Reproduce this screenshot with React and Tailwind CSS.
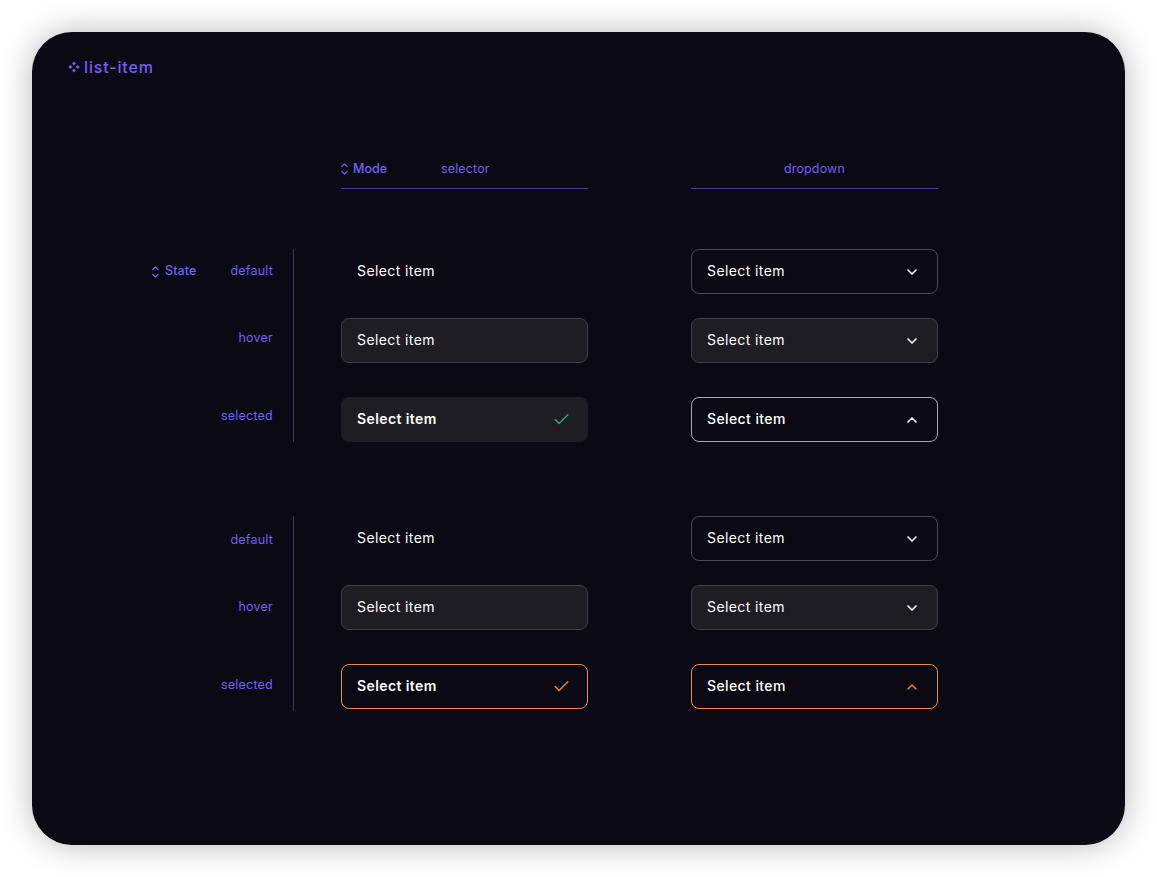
import { Check, ChevronDown, ChevronUp } from 'lucide-react'

function LogoMark() {
  return (
    <svg width="12" height="12" viewBox="0 0 12 12" fill="#7460f5" className="shrink-0">
      <path d="M6 0.4 7.9 2.5 6 4.5 4.1 2.5Z" />
      <path d="M2.4 4 4.4 6 2.4 8 0.4 6Z" />
      <path d="M9.6 4 11.6 6 9.6 8 7.6 6Z" />
      <path d="M6 7.5 7.9 9.5 6 11.6 4.1 9.5Z" />
    </svg>
  )
}

function UpDown() {
  return (
    <svg width="7" height="12" viewBox="0 0 7 12" fill="none" stroke="#7460f5" strokeWidth="1.3" strokeLinecap="round" strokeLinejoin="round" className="shrink-0">
      <path d="M0.8 3.6 3.5 1 6.2 3.6" />
      <path d="M0.8 8.4 3.5 11 6.2 8.4" />
    </svg>
  )
}

function Item({ bold, className = '', children }) {
  return (
    <div className={`flex h-[45px] w-[247px] items-center justify-between rounded-lg border px-[15px] text-[14px] text-white tracking-[0.4px] ${bold ? 'font-semibold' : ''} ${className}`}>
      <span className="pb-[2px]">Select item</span>
      {children}
    </div>
  )
}

function Row({ className = '', label, labelClass = '', extra, children }) {
  return (
    <div className={`flex ${className}`}>
      <div className="flex w-[143px] items-center justify-between pr-5 text-[12.5px] text-[#7460f5] tracking-[0.22px]">
        <span className="ml-[2px] flex items-center gap-[6px] font-medium tracking-[0.1px]">{extra}</span>
        <span className={labelClass}>{label}</span>
      </div>
      <div className="ml-[48px] flex gap-[103px]">{children}</div>
    </div>
  )
}

function Group({ className = '', selected, first }) {
  const arrow = <ChevronDown size={16} strokeWidth={2.5} className="mr-[2px] text-white" />
  return (
    <div className={`relative ${className}`}>
      <div className="absolute left-[143px] top-0 bottom-0 w-px bg-[#3a3463]" />
      <Row
        label="default"
        labelClass={first ? '' : 'mt-[3px]'}
        extra={first ? <><UpDown /> State</> : null}
      >
        <Item className="border-transparent" />
        <Item className="border-[#4a4a55]">{arrow}</Item>
      </Row>
      <Row className="mt-6" label="hover" labelClass={first ? 'mb-[5px]' : ''}>
        <Item className="bg-[#1d1d23] border-[#3f3f48]" />
        <Item className="bg-[#1d1d23] border-[#3f3f48]">{arrow}</Item>
      </Row>
      <Row className="mt-[34px]" label="selected" labelClass={first ? 'mb-[7px]' : 'mb-[3px]'}>
        {selected === 'fill' ? (
          <Item bold className="bg-[#1d1d23] border-transparent">
            <Check size={19} strokeWidth={1.7} className="mr-[1px] text-[#22b07d]" />
          </Item>
        ) : (
          <Item bold className="border-[#f08a4b]">
            <Check size={19} strokeWidth={1.7} className="mr-[1px] text-[#f08a4b]" />
          </Item>
        )}
        {selected === 'fill' ? (
          <Item className="border-[#a9a8b4] font-medium">
            <ChevronUp size={16} strokeWidth={2.5} className="mr-[2px] text-white" />
          </Item>
        ) : (
          <Item className="border-[#f08a4b] font-medium">
            <ChevronUp size={16} strokeWidth={2} className="mr-[2px] text-[#f08a4b]" />
          </Item>
        )}
      </Row>
    </div>
  )
}

export default function App() {
  return (
    <div className="min-h-[877px] bg-white p-8 font-['Inter','Liberation_Sans',sans-serif]">
      <div className="h-[813px] w-[1093px] rounded-[40px] bg-[#0a0914] pl-9 pt-[25px] shadow-[0_0_32px_rgba(0,0,0,0.28)]">
        <div className="flex h-5 items-center gap-[4px] text-[16px] font-medium tracking-[0.85px] text-[#7460f5]">
          <LogoMark />
          <span>list-item</span>
        </div>

        <div className="pl-[82px]">
          <div className="ml-[191px] mt-[66px] flex gap-[103px] text-[12.5px] tracking-[0.15px] text-[#7460f5]">
            <div className="flex h-[46px] w-[247px] items-center border-b border-[#4a3aa8] pt-[7px]">
              <span className="flex w-[100px] items-center gap-[5px] font-medium tracking-[0px]">
                <UpDown /> Mode
              </span>
              <span>selector</span>
            </div>
            <div className="flex h-[46px] w-[247px] items-center justify-center border-b border-[#4a3aa8] pt-[7px]">
              dropdown
            </div>
          </div>

          <Group first selected="fill" className="mt-[60px]" />
          <Group selected="line" className="mt-[74px] pb-[2px]" />
        </div>
      </div>
    </div>
  )
}
